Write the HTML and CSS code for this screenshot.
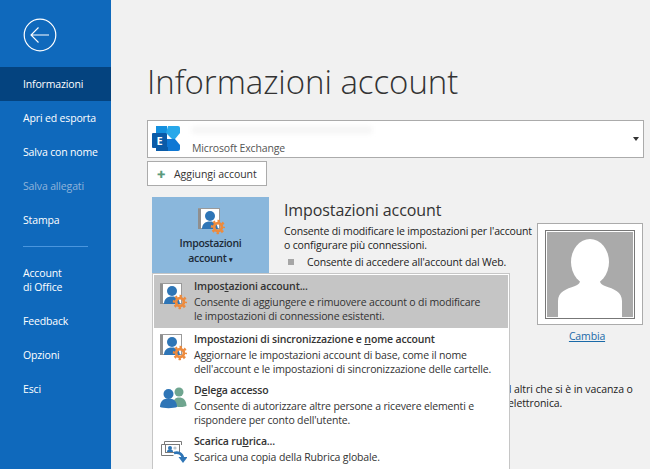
FILE: index.html
```html
<!DOCTYPE html>
<html lang="it">
<head>
<meta charset="utf-8">
<title>Informazioni account</title>
<link rel="stylesheet" href="styles.css">
</head>
<body>
<svg width="0" height="0" class="defs">
  <symbol id="acct" viewBox="0 0 28 28">
    <rect x="1.500" y="1.500" width="21" height="20" fill="#fff" stroke="#9a9a9a"/>
    <rect x="1" y="2" width="3" height="20" fill="#8f8f8f"/>
    <circle cx="13" cy="9" r="5" fill="#2e75b6"/>
    <path d="M5 22c0-5 3-7.500 8-7.500s7 2 8 7.500z" fill="#2e75b6"/>
    <circle cx="21" cy="20" r="6" fill="none" stroke="#ed8b3e" stroke-width="2.400" stroke-dasharray="2.400 2.312" stroke-dashoffset="1.200"/>
    <circle cx="21" cy="20" r="3.900" fill="none" stroke="#ed8b3e" stroke-width="2.800"/>
  </symbol>
</svg>
<div class="app">
  <nav class="side">
    <div class="back">
      <svg width="34" height="34" viewBox="0 0 34 34"><circle cx="17" cy="17" r="15.800" fill="none" stroke="#fff" stroke-width="1.200"/><path d="M8 17H26M15.500 9.500L8 17l7.500 7.500" fill="none" stroke="#fff" stroke-width="1.100"/></svg>
    </div>
    <a class="item active">Informazioni</a>
    <a class="item">Apri ed esporta</a>
    <a class="item">Salva con nome</a>
    <a class="item dim">Salva allegati</a>
    <a class="item">Stampa</a>
    <div class="sep"></div>
    <a class="item two">Account<br>di Office</a>
    <a class="item">Feedback</a>
    <a class="item">Opzioni</a>
    <a class="item">Esci</a>
  </nav>
  <main class="main">
    <h1 class="title">Informazioni account</h1>
    <div class="picker">
      <svg class="ex" width="30" height="28" viewBox="0 0 30 28">
        <path d="M5 1h11v7H5z" fill="#1490df"/>
        <path d="M17 1h10a2 2 0 0 1 2 2v5l-5 6h-3l-6-6z" fill="#28a8ea"/>
        <path d="M15 14h9l5 6v4a2 2 0 0 1-2 2H17l-2-3z" fill="#0f78d4"/>
        <path d="M5 22h12v4H5z" fill="#0a5ba8"/>
        <rect x="1" y="8" width="15" height="15" rx="1" fill="#0a5ba8"/>
        <text x="8.500" y="19.500" class="ex-e">E</text>
      </svg>
      <div class="picker-text">
        <div class="blur"></div>
        <div class="picker-name">Microsoft Exchange</div>
      </div>
      <span class="caret"></span>
    </div>
    <button class="add"><span class="plus">✚</span>Aggiungi account</button>
    <div class="section">
      <div class="big">
        <svg width="28" height="28"><use href="#acct"/></svg>
        <div class="big-label">Impostazioni<br>account <span class="tiny">▾</span></div>
      </div>
      <div class="info">
        <h2 class="h2">Impostazioni account</h2>
        <p class="p">Consente di modificare le impostazioni per l'account<br>o configurare più connessioni.</p>
        <p class="p bullet"><span class="sq"></span>Consente di accedere all'account dal Web.</p>
      </div>
      <div class="photo">
        <div class="frame">
          <svg width="86" height="85" viewBox="0 0 86 85"><rect width="86" height="85" fill="#aaa"/><ellipse cx="43" cy="30" rx="19" ry="23" fill="#fff"/><path d="M11 85V69c0-9 8-12 17-15 5-2 5-4 5-6h20c0 2 0 4 5 6 9 3 17 6 17 15v16z" fill="#fff"/></svg>
        </div>
        <a class="change">Cambia</a>
      </div>
    </div>
    <div class="ooo"><p class="p">d altri che si è in vacanza o</p><p class="p l2">elettronica.</p></div>
  </main>
</div>

<div class="menu">
  <div class="mi sel">
    <svg class="mi-ico" width="28" height="28"><use href="#acct"/></svg>
    <div><div class="mi-t">Impos<u>t</u>azioni account...</div><div class="mi-d">Consente di aggiungere e rimuovere account o di modificare<br>le impostazioni di connessione esistenti.</div></div>
  </div>
  <div class="mi">
    <svg class="mi-ico" width="28" height="28"><use href="#acct"/></svg>
    <div><div class="mi-t">Impostazioni di sincronizzazione e <u>n</u>ome account</div><div class="mi-d">Aggiornare le impostazioni account di base, come il nome<br>dell'account e le impostazioni di sincronizzazione delle cartelle.</div></div>
  </div>
  <div class="mi">
    <svg class="mi-ico" width="28" height="28" viewBox="0 0 28 28">
      <circle cx="20" cy="8" r="4.500" fill="#6fa58f"/><path d="M14 22c0-6 2-8.500 6-8.500s7.500 2.500 7.500 8.500c-2 1-6 1-8 1z" fill="#6fa58f"/>
      <circle cx="9.500" cy="10" r="5" fill="#2e75b6"/><path d="M1 23c0-6 3.500-8.500 8.500-8.500S18 17 18 23c-3 1.500-14 1.500-17 0z" fill="#2e75b6"/>
    </svg>
    <div><div class="mi-t">D<u>e</u>lega accesso</div><div class="mi-d">Consente di autorizzare altre persone a ricevere elementi e<br>rispondere per conto dell'utente.</div></div>
  </div>
  <div class="mi">
    <svg class="mi-ico" width="28" height="28" viewBox="0 0 28 28">
      <path d="M5.500 9V6.500h17V10M2.500 12V9.500h4M2.500 12v8.500h12" fill="none" stroke="#7a7a7a"/>
      <rect x="6.500" y="9.500" width="14" height="8" fill="#fff" stroke="#7a7a7a"/>
      <circle cx="11" cy="13" r="2" fill="#2e75b6"/><path d="M8 17c0-2 1-2.500 3-2.500s3 .5 3 2.500z" fill="#2e75b6"/>
      <circle cx="16" cy="13" r="1.600" fill="#b9c4cc"/>
      <path d="M15 18c4-1 8 0 9 5" fill="none" stroke="#2e75b6" stroke-width="2.600"/>
      <path d="M19.500 22h9l-4.500 6z" fill="#2e75b6"/>
    </svg>
    <div><div class="mi-t">Scarica ru<u>b</u>rica...</div><div class="mi-d">Scarica una copia della Rubrica globale.</div></div>
  </div>
</div>
</body>
</html>
```
FILE: styles.css
```css
* { box-sizing: border-box; }
html, body { margin: 0; height: 100%; overflow: hidden; }
body { background: #f1f1f1; font-family: "Open Sans", sans-serif; font-size: 10.5px; letter-spacing: -.15px; color: #333; }
.app { display: flex; height: 469px; }
.side { width: 111px; flex: none; background: #0f69bc; color: #fff; display: flex; flex-direction: column; }
.back { height: 67px; padding: 18px 0 0 23px; }
.item { display: flex; align-items: center; height: 34px; padding: 0 0 0 23px; }
.item.active { background: #04437f; }
.item.dim { color: #8fb4da; }
.item.two { height: 48px; line-height: 14px; display: block; padding-top: 10px; }
.sep { height: 1px; background: #4a96de; margin: 9px 23px 9px 23px; }
.main { flex: 1; padding: 0 6px 0 36px; position: relative; }
.title { font-weight: 300; font-size: 33px; line-height: 44px; margin: 60px 0 16px; color: #333; letter-spacing: -.05px; }
.picker { height: 38px; background: #fff; border: 1px solid #ababab; display: flex; align-items: center; position: relative; padding-left: 3px; }
.ex { flex: none; }
.ex-e { font: bold 11px "Open Sans", sans-serif; fill: #fff; text-anchor: middle; }
.picker-text { padding-left: 11px; flex: 1; }
.blur { height: 8px; width: 180px; background: #f6f6f6; margin-top: 2px; margin-bottom: 7px; filter: blur(2px); }
.picker-name { color: #555; line-height: 14px; }
.caret { position: absolute; right: 4px; top: 16px; border: 3px solid transparent; border-top: 4px solid #333; border-bottom: 0; }
.add { display: flex; align-items: center; height: 25px; width: 120px; margin-top: 3px; background: #fff; border: 1px solid #ababab; padding: 0 0 0 9px; font: 10.5px "Open Sans", sans-serif; letter-spacing: -.05px; color: #333; }
.plus { color: #5b9a7d; font-size: 10px; width: 17px; text-align: left; }
.section { display: flex; margin: 11px 0 0 5px; }
.big { width: 117px; height: 76px; background: #8ab7dc; display: flex; flex-direction: column; align-items: center; padding-top: 10px; flex: none; color: #1c2a38; }
.big-label { text-align: center; line-height: 15px; margin-top: 1px; font-weight: 600; letter-spacing: -.3px; }
.tiny { font-size: 7px; }
.info { width: 268px; padding-left: 15px; flex: none; }
.h2 { font-weight: 400; font-size: 16px; line-height: 22px; margin: 2px 0 3px; color: #333; letter-spacing: -.1px; }
.p { margin: 0; line-height: 14px; color: #222; }
.bullet { display: flex; align-items: center; margin-top: 3px; padding-left: 4px; }
.sq { width: 6px; height: 6px; background: #a6a6a6; margin-right: 13px; }
.photo { width: 106px; text-align: center; margin-top: 26px; flex: none; }
.frame { width: 106px; height: 102px; border: 1px solid #ababab; background: #fff; display: flex; align-items: center; justify-content: center; }
.frame svg { outline: 1px solid #777; outline-offset: 1px; }
.change { display: block; margin-top: 4px; padding-right: 6px; color: #1a6aa8; text-decoration: underline; line-height: 14px; }
.ooo { position: absolute; left: 394px; top: 382px; width: 140px; letter-spacing: -.08px; }
.l2 { padding-left: 3px; }
.defs { position: absolute; }
.menu { position: absolute; left: 152px; top: 273px; width: 358px; height: 196px; background: #fff; border: 1px solid #c6c6c6; border-bottom: 0; padding: 1px; }
.mi { display: flex; height: 53px; padding: 4px 0 0 5px; }
.mi + .mi { height: 51px; }
.mi.sel { background: #c5c5c5; }
.mi-ico { flex: none; margin-right: 7px; margin-top: 3px; }
.mi + .mi .mi-ico { margin-top: 1px; }
.mi-t { font-weight: 600; line-height: 14px; color: #333; }
.mi-d { line-height: 14px; color: #333; margin-top: 2px; }
```
